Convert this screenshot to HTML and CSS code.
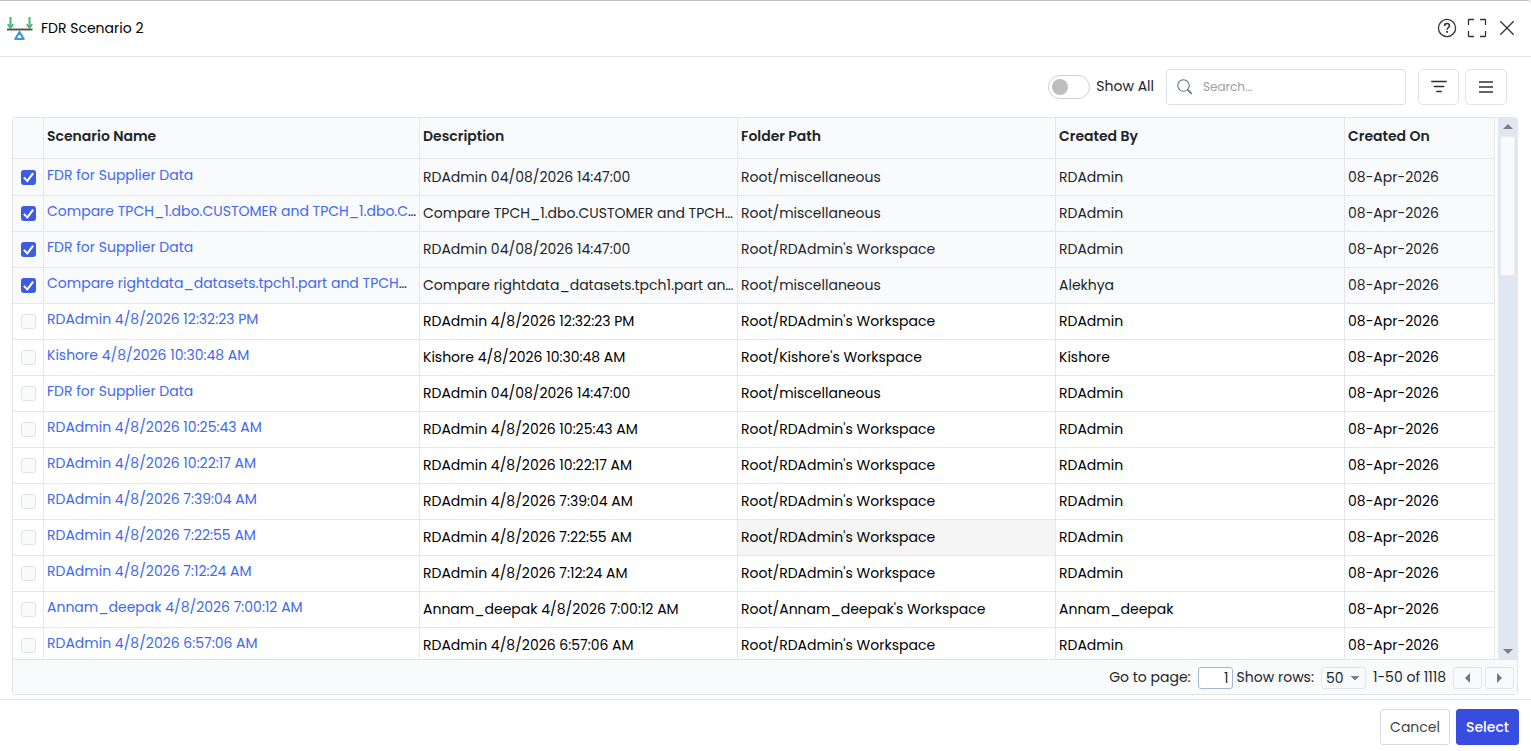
FILE: index.html
```html
<!DOCTYPE html>
<html lang="en">
<head>
<meta charset="utf-8">
<title>FDR Scenario 2</title>
<link rel="stylesheet" href="styles.css">
</head>
<body>
<div class="dialog">
  <header class="dialog-head">
    <svg class="logo" width="26" height="24" viewBox="0 0 26 24" fill="none">
      <path d="M3.500 0v10M22.500 0v10" stroke="#3fba6f" stroke-width="2"/>
      <path d="M.8 7.300l2.700 3.500 2.700-3.500M19.800 7.300l2.700 3.500 2.700-3.500" stroke="#3fba6f" stroke-width="1.800"/>
      <path d="M0 12.500h25.500" stroke="#555" stroke-width="2"/>
      <path d="M12.500 15L8.300 22h8.400z" stroke="#3f97d3" stroke-width="2.200" stroke-linejoin="round"/>
    </svg>
    <h1 class="title">FDR Scenario 2</h1>
    <div class="head-actions">
      <button class="icon-btn" aria-label="Help"><svg width="20" height="20" viewBox="0 0 20 20" fill="none" stroke="#333"><circle cx="10" cy="10" r="8.600" stroke-width="1.300"/><path d="M7.600 8c0-3.200 4.900-3.200 4.900-.2 0 1.700-2.400 1.800-2.400 4" stroke-width="1.600"/><path d="M10.100 13v1.800" stroke-width="1.800"/></svg></button>
      <button class="icon-btn" aria-label="Full screen"><svg width="20" height="20" viewBox="0 0 20 20" fill="none" stroke="#333" stroke-width="1.300"><path d="M1.500 7V2q0-.5.5-.5h5M13 1.500h5q.5 0 .5.500v5M18.500 13v5q0 .5-.5.500h-5M7 18.500H2q-.5 0-.5-.5v-5"/></svg></button>
      <button class="icon-btn" aria-label="Close"><svg width="20" height="20" viewBox="0 0 20 20" fill="none" stroke="#333" stroke-width="1.300"><path d="M3.300 3.300l13.400 13.400M16.700 3.300L3.300 16.700"/></svg></button>
    </div>
  </header>

  <main class="content">
    <div class="toolbar">
      <label class="toggle"><input type="checkbox" role="switch" class="switch"><span class="toggle-text">Show All</span></label>
      <label class="search">
        <svg width="16" height="16" viewBox="0 0 16 16" fill="none" stroke="#6c757d"><circle cx="6.500" cy="6.500" r="5.700" stroke-width="1.100"/><path d="M10.800 10.800l4 4" stroke-width="1.700"/></svg>
        <input type="text" class="search-input" placeholder="Search..." aria-label="Search">
      </label>
      <div class="tools">
        <button class="tool-btn" aria-label="Filter"><svg width="18" height="16" viewBox="0 0 18 16" stroke="#2b2f36" stroke-width="1.600" stroke-linecap="round"><path d="M1.800 2.500h14.400M4.300 7.500h9.400M6.800 12.500h4.400"/></svg></button>
        <button class="tool-btn" aria-label="Menu"><svg width="16" height="16" viewBox="0 0 16 16" stroke="#62666b" stroke-width="1.800"><path d="M1 3h14M1 8h14M1 13h14"/></svg></button>
      </div>
    </div>

    <section class="grid">
      <div class="grid-body">
        <div class="grid-view">
          <table class="table">
            <colgroup><col class="c-check"><col class="c-name"><col class="c-text"><col class="c-text"><col class="c-by"><col class="c-on"></colgroup>
            <thead><tr><th></th><th>Scenario Name</th><th>Description</th><th>Folder Path</th><th>Created By</th><th>Created On</th></tr></thead>
            <tbody id="rows"></tbody>
          </table>
        </div>
        <div class="scrollbar" aria-hidden="true">
          <span class="arrow up"></span>
          <span class="thumb"></span>
          <span class="arrow down"></span>
        </div>
      </div>
      <div class="pager">
        <label class="page-field"><span class="pager-text">Go to page:</span><input type="text" class="page-input" value="1"></label>
        <label class="rows-field"><span class="pager-text">Show rows:</span><select class="rows-select"><option>50</option></select></label>
        <span class="pager-text range">1-50 of 1118</span>
        <button class="page-btn" aria-label="Previous page"><span class="arrow left"></span></button>
        <button class="page-btn" aria-label="Next page"><span class="arrow right"></span></button>
      </div>
    </section>
  </main>

  <footer class="dialog-foot">
    <button class="btn">Cancel</button>
    <button class="btn btn-primary">Select</button>
  </footer>
</div>
<script src="rows.js"></script>
</body>
</html>
```
FILE: styles.css
```css
* { box-sizing: border-box; }
body {
  margin: 0;
  font: 14px/20px Poppins, Inter, "Open Sans", sans-serif;
  color: #212529;
  background: #fff;
}
button, input, select { font: inherit; color: inherit; margin: 0; }
button { padding: 0; display: flex; align-items: center; justify-content: center; }

.dialog {
  height: 100vh;
  display: flex;
  flex-direction: column;
  border-top: 1px solid #bfbfbf;
  border-radius: 0 4px 0 0;
}
.dialog-head {
  flex: none;
  height: 56px;
  display: flex;
  align-items: center;
  gap: 8px;
  padding: 0 14px 2px 7px;
  border-bottom: 1px solid #e3e5e8;
}
.logo { margin-top: 2px; }
.title { margin: 0; font-size: 14px; font-weight: 400; color: #000; }
.head-actions { margin-left: auto; display: flex; gap: 10px; }
.icon-btn { width: 20px; height: 20px; border: 0; background: none; }

.content {
  flex: 1;
  min-height: 0;
  display: flex;
  flex-direction: column;
  gap: 12px;
  padding: 12px 13px 4px 12px;
}
.toolbar {
  flex: none;
  display: flex;
  justify-content: flex-end;
  align-items: center;
  gap: 12px;
  height: 36px;
  padding-right: 11px;
}
.toggle { display: flex; align-items: center; gap: 6px; }
.toggle-text { padding-bottom: 2px; }
.switch {
  appearance: none;
  width: 42px;
  height: 24px;
  margin: 0;
  padding: 3px;
  border: 1px solid #d0d0d8;
  border-radius: 12px;
}
.switch::before {
  content: "";
  display: block;
  width: 16px;
  height: 16px;
  border-radius: 50%;
  background: #bdbdbd;
}
.search {
  display: flex;
  align-items: center;
  gap: 10px;
  width: 240px;
  height: 36px;
  padding: 0 10px;
  border: 1px solid #dddfe6;
  border-radius: 3px;
}
.search-input { flex: 1; min-width: 0; border: 0; padding: 0; outline: 0; background: none; font-size: 12px; }
.search-input::placeholder { color: #9a9fa8; }
.tools { display: flex; gap: 6px; }
.tool-btn { width: 42px; height: 36px; border: 1px solid #e0e4ef; border-radius: 5px; background: #fff; }
.tool-btn:first-child { width: 41px; }

.grid {
  flex: 1;
  min-height: 0;
  display: flex;
  flex-direction: column;
  border: 1px solid #e2e4e7;
  border-right: 0;
  border-radius: 4px;
  overflow: hidden;
}
.grid-body { flex: 1; min-height: 0; display: flex; gap: 3px; }
.grid-view { flex: 1; min-width: 0; overflow: hidden; }
.table { width: 100%; table-layout: fixed; border-collapse: separate; border-spacing: 0; }
.c-check { width: 31px; }
.c-name { width: 376px; }
.c-text { width: 318px; }
.c-by { width: 289px; }
.c-on { width: 150px; }
.table th, .table td {
  height: 36px;
  padding: 0 3px 1px;
  text-align: left;
  border-right: 1px solid #e5e7ea;
  border-bottom: 1px solid #e5e7ea;
  overflow: hidden;
  white-space: nowrap;
  text-overflow: ellipsis;
}
.table th { height: 41px; padding-bottom: 4px; font-weight: 600; background: #f8fafc; color: #212529; }
.table td { color: #000; }
.table tbody tr:first-child td { height: 37px; }
.table td.name { padding: 0 0 5px 3px; }
.table td.check { padding: 0 0 0 8px; }
.selected td { background: #f8fafc; color: #212529; }
.table td.hovered { background: #f5f5f5; }
.link { color: #4169f0; text-decoration: none; }
.box {
  appearance: none;
  display: block;
  width: 15px;
  height: 15px;
  margin: 0;
  border: 1px solid #e2e4e7;
  border-radius: 3px;
  background: #f8fafc;
}
.box:checked { border: 0; background: #3d5be3; }
.box:checked::before {
  content: "";
  display: block;
  height: 15px;
  background: #fff;
  clip-path: polygon(14% 57%, 25% 49%, 41% 66%, 75% 20%, 87% 28%, 43% 86%);
}

.scrollbar {
  flex: none;
  width: 20px;
  display: flex;
  flex-direction: column;
  align-items: center;
  padding: 6px 3px 5px 2px;
  background: #e1e6f3;
}
.thumb { width: 15px; height: 140px; margin-top: 7px; background: #f8fafc; border: 1px solid #eceef4; border-radius: 3px; }
.arrow { width: 0; height: 0; border: 5px solid transparent; }
.up { border-top: 0; border-bottom-color: #808080; }
.down { margin-top: auto; border-bottom: 0; border-top-color: #808080; }
.left { border-left: 0; border-right-color: #777; }
.right { border-right: 0; border-left-color: #777; }

.pager {
  flex: none;
  height: 35px;
  display: flex;
  justify-content: flex-end;
  align-items: center;
  gap: 4px;
  padding: 2px 3px 0 0;
  border-top: 1px solid #e2e4e7;
  border-right: 1px solid #e2e4e7;
  background: #f8fafc;
}
.page-field, .rows-field { display: flex; align-items: center; gap: 7px; }
.pager-text { padding-bottom: 2px; }
.page-input { width: 35px; height: 22px; padding: 0 3px; text-align: right; border: 1px solid #a4b8d6; border-radius: 3px; background: #fff; }
.rows-select {
  appearance: none;
  width: 45px;
  height: 22px;
  padding: 0 4px;
  border: 1px solid #e2e4e7;
  border-radius: 3px;
  background: conic-gradient(from -45deg at 50% 100%, #808080 90deg, transparent 0) right 5px center / 10px 5px no-repeat;
}
.range { padding-left: 3px; padding-right: 3px; }
.page-btn { width: 29px; height: 22px; border: 1px solid #e2e4e7; border-radius: 3px; background: #f8fafc; }
.page-btn + .page-btn { margin-left: -1px; }

.dialog-foot {
  flex: none;
  display: flex;
  justify-content: flex-end;
  gap: 6px;
  padding: 9px 12px 6px;
  border-top: 1px solid #e1e3eb;
}
.btn { height: 36px; padding: 0 9px; border: 1px solid #d9dbde; border-radius: 3px; background: #fff; color: #444; }
.btn-primary { border-color: #384ce0; background: #384ce0; color: #fff; font-weight: 500; }
```
FILE: rows.js
```js
const misc = "Root/miscellaneous";
const own = "Root/RDAdmin's Workspace";
const fdr = "FDR for Supplier Data";
const fdrText = "RDAdmin 04/08/2026 14:47:00";
const stamped = (user, time) => [`${user} 4/8/2026 ${time}`, `${user} 4/8/2026 ${time}`, `Root/${user}'s Workspace`, user];
const data = [
  [fdr, fdrText, misc, "RDAdmin"],
  ["Compare TPCH_1.dbo.CUSTOMER and TPCH_1.dbo.C…", "Compare TPCH_1.dbo.CUSTOMER and TPCH…", misc, "RDAdmin"],
  [fdr, fdrText, own, "RDAdmin"],
  ["Compare rightdata_datasets.tpch1.part and TPCH…", "Compare rightdata_datasets.tpch1.part an…", misc, "Alekhya"],
  stamped("RDAdmin", "12:32:23 PM"),
  stamped("Kishore", "10:30:48 AM"),
  [fdr, fdrText, misc, "RDAdmin"],
  stamped("RDAdmin", "10:25:43 AM"),
  stamped("RDAdmin", "10:22:17 AM"),
  stamped("RDAdmin", "7:39:04 AM"),
  stamped("RDAdmin", "7:22:55 AM"),
  stamped("RDAdmin", "7:12:24 AM"),
  stamped("Annam_deepak", "7:00:12 AM"),
  stamped("RDAdmin", "6:57:06 AM")
];
document.getElementById("rows").innerHTML = data.map(([name, text, path, by], i) => `
  <tr class="${i < 4 ? "selected" : ""}">
    <td class="check"><input type="checkbox" class="box" aria-label="Select ${name}" ${i < 4 ? "checked" : ""}></td>
    <td class="name"><a class="link" href="#">${name.replace("…", "")}</a>${name.endsWith("…") ? "…" : ""}</td>
    <td>${text}</td>
    <td class="${i === 10 ? "hovered" : ""}">${path}</td>
    <td>${by}</td>
    <td>08-Apr-2026</td>
  </tr>`).join("");
```
